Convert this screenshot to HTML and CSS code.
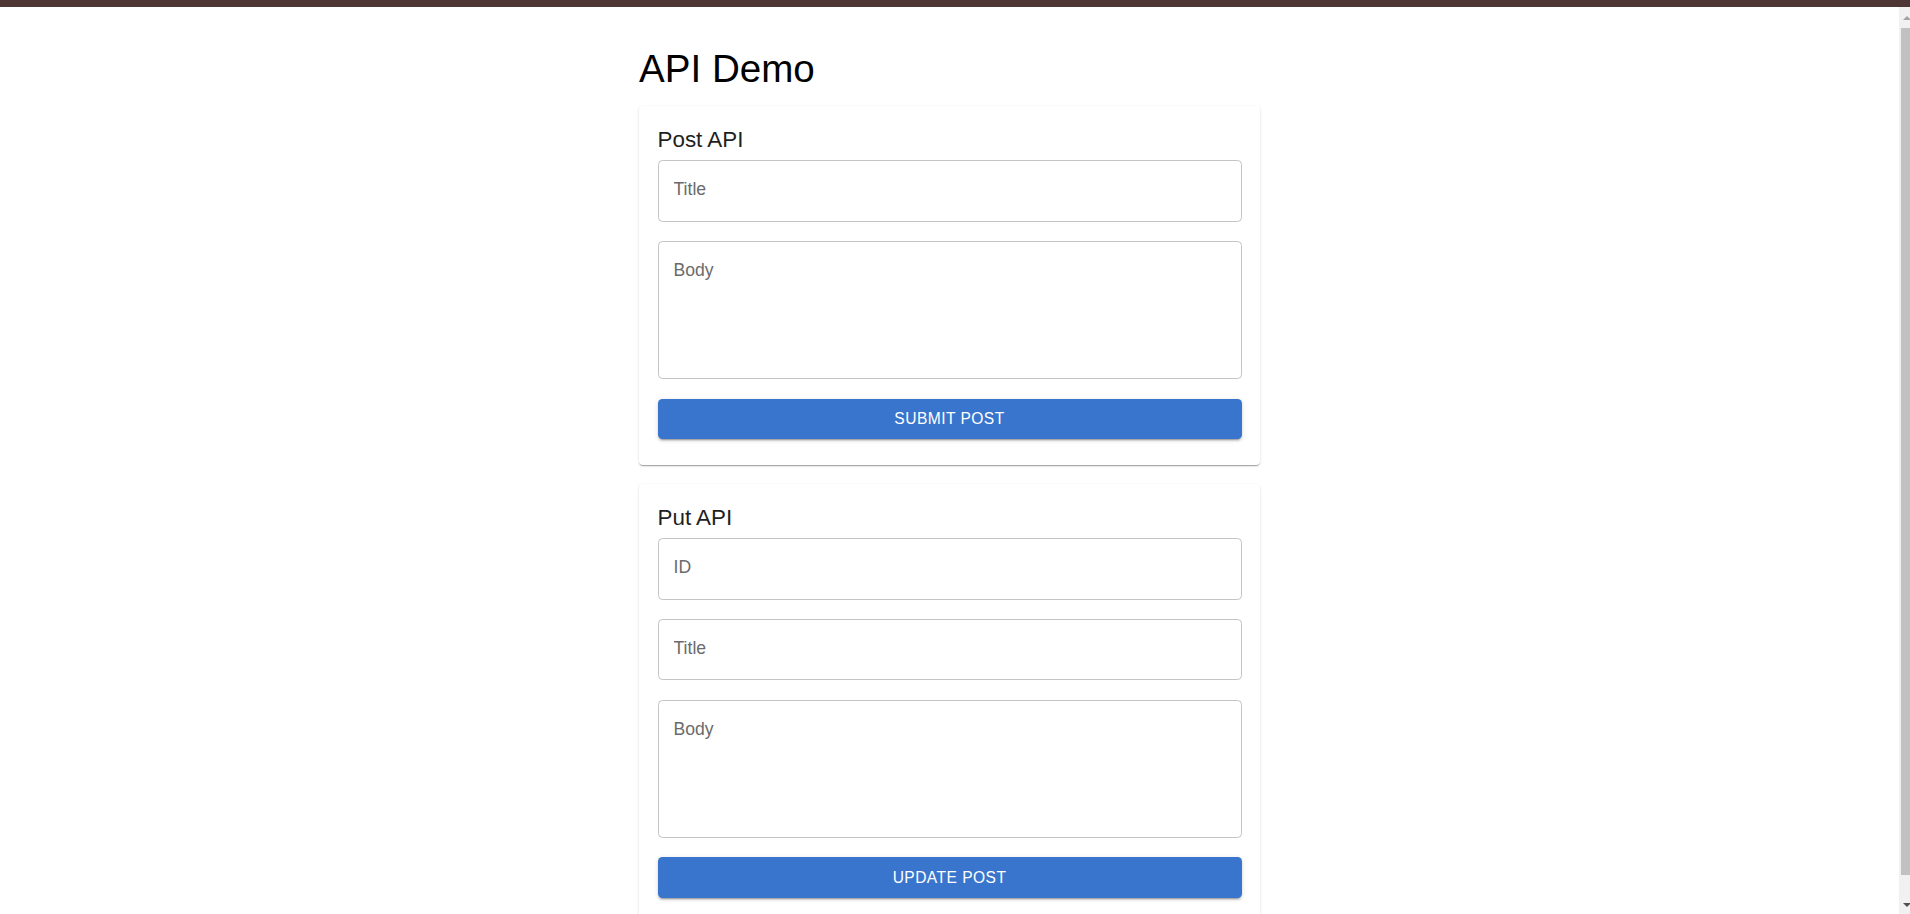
FILE: index.html
```html
<!DOCTYPE html>
<html lang="en">
<head>
<meta charset="utf-8">
<title>API Demo</title>
<link rel="stylesheet" href="styles.css">
</head>
<body>
<div class="topbar"></div>
<div class="viewport">
  <main class="main">
    <div class="container">
      <h1 class="page-title">API Demo</h1>
      <section class="card">
        <h2 class="card-title">Post API</h2>
        <input class="field" type="text" placeholder="Title">
        <textarea class="field field-multi" placeholder="Body"></textarea>
        <button class="btn" type="button">Submit Post</button>
      </section>
      <section class="card">
        <h2 class="card-title">Put API</h2>
        <input class="field" type="text" placeholder="ID">
        <input class="field" type="text" placeholder="Title">
        <textarea class="field field-multi" placeholder="Body"></textarea>
        <button class="btn" type="button">Update Post</button>
      </section>
    </div>
  </main>
  <div class="scrollbar">
    <div class="sb-btn"><span class="sb-arrow-up"></span></div>
    <div class="sb-thumb"></div>
    <div class="sb-btn sb-btn-down"><span class="sb-arrow-down"></span></div>
  </div>
</div>
</body>
</html>
```
FILE: styles.css
```css
html, body {
  margin: 0;
  padding: 0;
  height: 914px;
  overflow: hidden;
  background: #ffffff;
  font-family: "Liberation Sans", Arial, sans-serif;
}

.topbar {
  height: 7px;
  background: #4d3633;
}

.viewport {
  display: flex;
  height: 907px;
}

.main {
  flex: 1;
  overflow: hidden;
}

.container {
  width: 621px;
  margin: 0 auto;
}

.page-title {
  margin: 39px 0 14px;
  font-size: 38.6px;
  line-height: 46px;
  font-weight: 400;
  color: #000000;
}

.card {
  display: flex;
  flex-direction: column;
  background: #ffffff;
  border-radius: 4px;
  padding: 19px 18.5px 26.4px;
  margin-bottom: 18.5px;
  box-shadow: 0 2px 1px -1px rgba(0,0,0,0.2), 0 1px 1px 0 rgba(0,0,0,0.14), 0 1px 3px 0 rgba(0,0,0,0.12);
}

.card-title {
  margin: 0 0 5px;
  font-size: 22.4px;
  line-height: 30px;
  font-weight: 400;
  color: #1f1f1f;
}

.field {
  display: block;
  box-sizing: border-box;
  width: 100%;
  height: 61.6px;
  margin: 0 0 19.2px;
  padding: 0 15px 2px;
  border: 1px solid #c4c4c4;
  border-radius: 4.4px;
  background: #ffffff;
  font-family: "Liberation Sans", Arial, sans-serif;
  font-size: 17.6px;
  color: #1f1f1f;
  outline: none;
}

.field::placeholder {
  color: #6b6b6b;
  opacity: 1;
}

.field-multi {
  height: 138.6px;
  padding: 17px 15px;
  line-height: 22px;
  resize: none;
}

.btn {
  display: block;
  width: 100%;
  height: 40.5px;
  border: none;
  border-radius: 4.4px;
  background: #3975cc;
  color: #ffffff;
  font-family: "Liberation Sans", Arial, sans-serif;
  font-size: 15.6px;
  letter-spacing: 0.44px;
  text-transform: uppercase;
  box-shadow: 0 3px 1px -2px rgba(0,0,0,0.2), 0 2px 2px 0 rgba(0,0,0,0.14), 0 1px 5px 0 rgba(0,0,0,0.12);
}

.scrollbar {
  width: 11px;
  flex: none;
  display: flex;
  flex-direction: column;
  background: #f1f1f1;
}

.sb-btn {
  height: 21px;
  display: flex;
  align-items: center;
  padding-left: 3.5px;
}

.sb-btn-down {
  margin-top: auto;
  height: 18px;
}

.sb-arrow-up {
  width: 0;
  height: 0;
  border-left: 4px solid transparent;
  border-right: 4px solid transparent;
  border-bottom: 4px solid #a3a3a3;
}

.sb-arrow-down {
  width: 0;
  height: 0;
  border-left: 4px solid transparent;
  border-right: 4px solid transparent;
  border-top: 4px solid #505050;
}

.sb-thumb {
  height: 847px;
  margin-left: 2px;
  background: #c1c1c1;
}
```
